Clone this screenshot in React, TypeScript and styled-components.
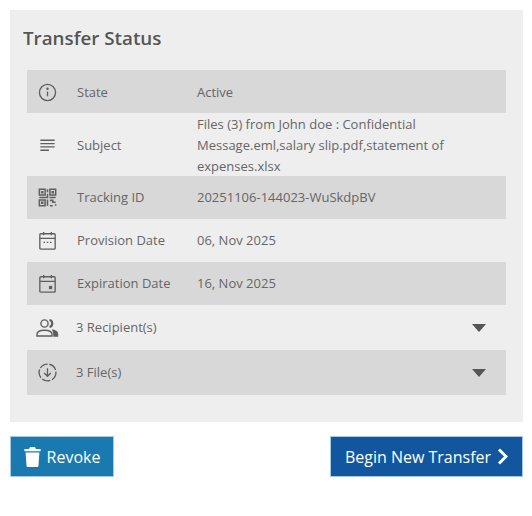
import * as React from 'react';
import styled, { createGlobalStyle } from 'styled-components';

const GlobalStyle = createGlobalStyle`
  html, body {
    margin: 0;
    padding: 0;
    background: #fff;
    font-family: "Open Sans", "Noto Sans", sans-serif;
  }
  * { box-sizing: border-box; }
`;

const Icons: Record<string, React.ReactNode> = {
  info: (
    <>
      <circle cx="12" cy="12" r="8.400" />
      <path d="M12 11v5" />
      <circle cx="12" cy="8.200" r="0.600" fill="currentColor" />
    </>
  ),
  lines: <path d="M4.500 6.500h15M4.500 10h15M4.500 13.500h15M4.500 17h9" />,
  qr: (
    <path
      strokeWidth="1.600"
      d="M3.500 3.500h6v6h-6zM14.500 3.500h6v6h-6zM3.500 14.500h6v6h-6zM6 6h1v1H6zM17 6h1v1h-1zM6 17h1v1H6zM12 3.500v3M12 8v4H3.500M14 12h6.500M12 14v6.500M14.500 15h3v2h3M20.500 14v0M14.500 20.500h3M20.500 19v1.500"
    />
  ),
  calendar: (
    <>
      <rect x="4" y="5" width="16" height="16" rx="1" />
      <path d="M4 9.800h16M8 3v3.500M16 3v3.500M7.800 14h1.600M11.200 14h1.600M14.600 14h1.600" />
    </>
  ),
  event: (
    <>
      <rect x="4" y="5" width="16" height="16" rx="1" />
      <path d="M4 9.800h16M8 3v3.500M16 3v3.500" />
      <rect x="13.500" y="14.500" width="3.400" height="3.400" fill="currentColor" stroke="none" />
    </>
  ),
  people: (
    <>
      <circle cx="9.500" cy="7.500" r="3.600" />
      <path d="M2 20v-1.500c0-2.800 3.200-4.300 7.500-4.300s7.500 1.500 7.500 4.300V20z" />
      <path d="M14.500 4a3.600 3.600 0 0 1 0 7" strokeWidth="2.200" />
      <path d="M18 14.300c2.800.6 4.500 2 4.500 4V20h-3.500c0-2.400-.3-4-1-5.700z" fill="currentColor" />
    </>
  ),
  download: (
    <>
      <circle cx="12" cy="12" r="8.800" strokeDasharray="9 1.800" />
      <path d="M12 7.500v8.500M8.500 12.500l3.500 3.500 3.500-3.500" />
    </>
  ),
};

const RowIcon: React.FC<{ name: string; wide?: boolean }> = ({ name, wide }) => (
  <IconSvg viewBox="0 0 24 24" wide={wide}>{Icons[name]}</IconSvg>
);

const App: React.FC = () => (
  <Page>
    <GlobalStyle />
    <Panel>
      <Title>Transfer Status</Title>
      <Table>
        <Row shaded lowered height={43}>
          <IconCell><RowIcon name="info" /></IconCell>
          <Label>State</Label>
          <Value>Active</Value>
        </Row>
        <Row lowered height={63}>
          <IconCell><RowIcon name="lines" /></IconCell>
          <Label>Subject</Label>
          <Value>
            Files (3) from John doe : Confidential Message.eml,salary slip.pdf,statement of expenses.xlsx
          </Value>
        </Row>
        <Row shaded height={43}>
          <IconCell><RowIcon name="qr" /></IconCell>
          <Label>Tracking ID</Label>
          <Value>20251106-144023-WuSkdpBV</Value>
        </Row>
        <Row height={43}>
          <IconCell><RowIcon name="calendar" /></IconCell>
          <Label>Provision Date</Label>
          <Value>06, Nov 2025</Value>
        </Row>
        <Row shaded height={43}>
          <IconCell><RowIcon name="event" /></IconCell>
          <Label>Expiration Date</Label>
          <Value>16, Nov 2025</Value>
        </Row>
        <Row height={45}>
          <IconCell><RowIcon name="people" wide /></IconCell>
          <Summary>3 Recipient(s)</Summary>
          <Caret />
        </Row>
        <Row shaded height={45}>
          <IconCell><RowIcon name="download" /></IconCell>
          <Summary>3 File(s)</Summary>
          <Caret />
        </Row>
      </Table>
    </Panel>
    <Actions>
      <Button color="#1a7aaf" width={104}>
        <svg width="17" height="20" viewBox="0 0 17 20" fill="#fff">
          <path d="M6 0h5l1 2h4.600v2.200H.4V2H5zM1.600 5.400h13.800l-.9 13c-.05.9-.7 1.600-1.600 1.600H4.100c-.9 0-1.550-.7-1.600-1.600z" />
        </svg>
        Revoke
      </Button>
      <Button color="#12569f" width={193}>
        Begin New Transfer
        <svg width="11" height="17" viewBox="0 0 11 17" fill="none" stroke="#fff" strokeWidth="3">
          <path d="M2 1.500l7 7-7 7" />
        </svg>
      </Button>
    </Actions>
  </Page>
);

const Page = styled.div`
  width: 532px;
  padding: 10px 9px 0 10px;
`;

const Panel = styled.section`
  background: #eeeeee;
  height: 412px;
  padding: 14px 17px 0;
`;

const Title = styled.h2`
  margin: 0 0 17px -4px;
  height: 29px;
  font-size: 18.800px;
  line-height: 29px;
  font-weight: 600;
  color: #555;
`;

const Table = styled.div`
  display: flex;
  flex-direction: column;
`;

const Row = styled.div<{ shaded?: boolean; lowered?: boolean; height: number }>`
  display: flex;
  align-items: center;
  height: ${({ height }) => height}px;
  padding-top: ${({ lowered }) => (lowered ? 1 : 0)}px;
  background: ${({ shaded }) => (shaded ? '#d8d8d8' : 'transparent')};
  font-size: 13px;
  line-height: 21px;
  color: #666;
`;

const IconCell = styled.div`
  width: 40px;
  margin-right: 10px;
  display: flex;
  justify-content: center;
  flex-shrink: 0;
`;

const IconSvg = styled.svg<{ wide?: boolean }>`
  width: ${({ wide }) => (wide ? 24 : 23)}px;
  height: ${({ wide }) => (wide ? 24 : 23)}px;
  fill: none;
  stroke: currentColor;
  stroke-width: 1.400;
  color: #5f5f5f;
`;

const Label = styled.div`
  width: 120px;
  flex-shrink: 0;
`;

const Value = styled.div`
  flex: 1;
  padding-right: 40px;
`;

const Summary = styled.div`
  flex: 1;
  margin-left: -1px;
`;

const Caret = styled.span`
  width: 0;
  height: 0;
  margin-right: 20px;
  border-left: 7.500px solid transparent;
  border-right: 7.500px solid transparent;
  border-top: 8px solid #555;
`;

const Actions = styled.div`
  display: flex;
  justify-content: space-between;
  margin-top: 14px;
`;

const Button = styled.button<{ color: string; width: number }>`
  display: inline-flex;
  align-items: center;
  justify-content: center;
  gap: 6px;
  width: ${({ width }) => width}px;
  height: 41px;
  padding: 0;
  background: ${({ color }) => color};
  border: 1px solid #a9cbe2;
  border-radius: 0;
  color: #fff;
  font-family: inherit;
  font-size: 16px;
`;

export default App;
